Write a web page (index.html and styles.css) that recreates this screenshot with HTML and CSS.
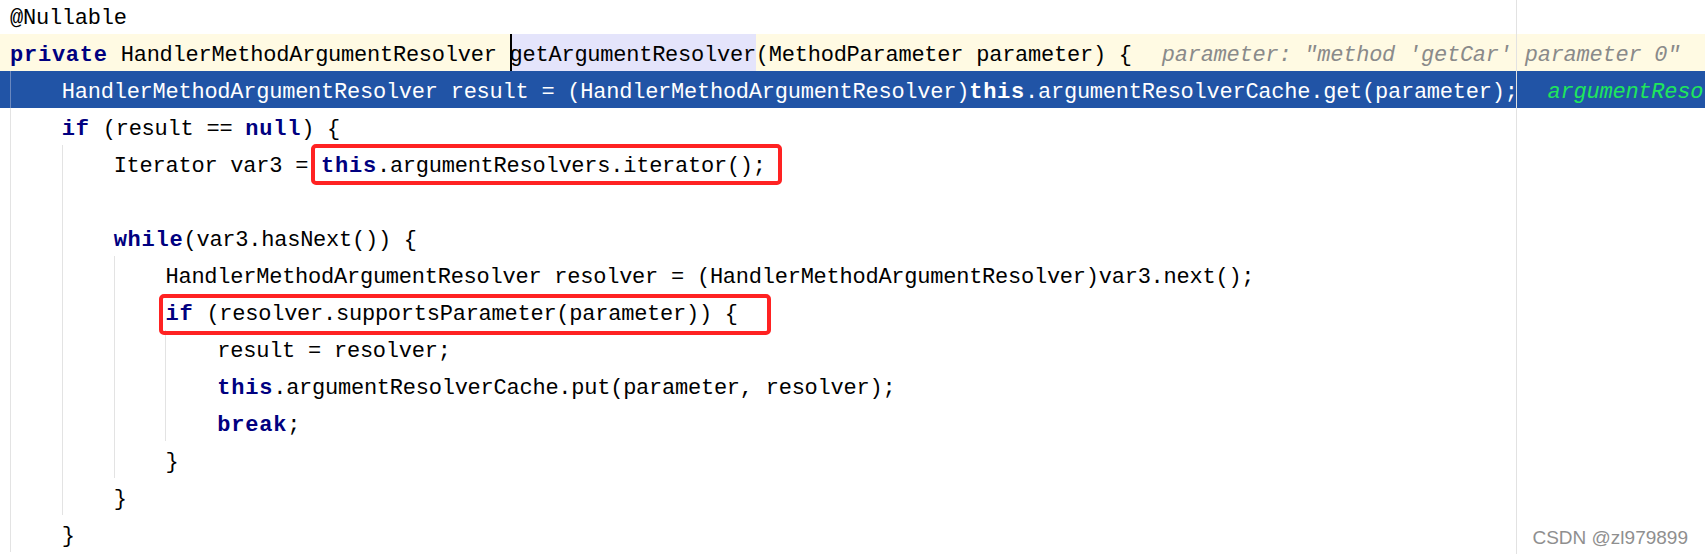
FILE: index.html
```html
<!DOCTYPE html>
<html lang="en">
<head>
    <meta charset="UTF-8">
    <title>getArgumentResolver</title>
    <link rel="stylesheet" href="styles.css">
</head>
<body>
    <div class="code">
        <div class="line">@Nullable</div>
        <div class="line current"><span class="kw">private</span> HandlerMethodArgumentResolver <span class="ident">getArgumentResolver</span>(MethodParameter parameter) {<span class="hint">parameter: "method 'getCar' parameter 0"</span></div>

        <!-- cuerpo del metodo -->
        <div class="body">
            <div class="line exec">HandlerMethodArgumentResolver result = (HandlerMethodArgumentResolver)<span class="kw">this</span>.argumentResolverCache.get(parameter);<span class="value">argumentResolverCache:  size = 0</span></div>
            <div class="line"><span class="kw">if</span> (result == <span class="kw">null</span>) {</div>

            <div class="body">
                <div class="line">Iterator var3 = <span class="mark mark-one"><span class="kw">this</span>.argumentResolvers.iterator();</span></div>
                <div class="line"></div>
                <div class="line"><span class="kw">while</span>(var3.hasNext()) {</div>

                <div class="body">
                    <div class="line">HandlerMethodArgumentResolver resolver = (HandlerMethodArgumentResolver)var3.next();</div>
                    <div class="line"><span class="mark mark-two"><span class="kw">if</span> (resolver.supportsParameter(parameter)) {</span></div>

                    <div class="body">
                        <div class="line">result = resolver;</div>
                        <div class="line"><span class="kw">this</span>.argumentResolverCache.put(parameter, resolver);</div>
                        <div class="line"><span class="kw">break</span>;</div>
                    </div>

                    <div class="line">}</div>
                </div>

                <div class="line">}</div>
            </div>

            <div class="line">}</div>
        </div>
    </div>

    <div class="margin-guide"></div>
    <div class="watermark">CSDN @zl979899</div>
</body>
</html>
```

FILE: styles.css
```css
/* Pagina: editor de codigo */
body {
    margin: 0;
    height: 554px;
    overflow: hidden;
    position: relative;
    background-color: #fff;
}
/* Bloque de codigo, ancho de celda 12.96px */
.code {
    --cw: 12.96px;
    margin-top: -3px;
    font-family: "Liberation Mono", "DejaVu Sans Mono", monospace;
    font-size: 22px;
    letter-spacing: -0.24px;
    line-height: 44px;
    color: #000;
}
/* Cada linea: 37px de alto, texto un poco mas abajo */
.line {
    height: 37px;
    padding-left: 10px;
    white-space: pre;
    overflow: hidden;
}
/* Guias de sangria */
.body {
    margin-left: 10px;
    border-left: 1px solid #e3e3e3;
}
.body .body {
    margin-left: calc(4 * var(--cw) - 1px);
}
.body .line {
    padding-left: calc(4 * var(--cw) - 1px);
}
/* Linea del cursor */
.current {
    background-color: #fffae3;
}
/* Punto de ejecucion */
.body .exec {
    margin-left: -11px;
    padding-left: calc(10px + 4 * var(--cw));
    color: #fff;
    background: linear-gradient(90deg, #2154a6 10px, #6a88bf 10px, #6a88bf 11px, #2154a6 11px);
}
/* Palabras clave */
.kw {
    font-weight: bold;
    color: #000080;
    letter-spacing: 0.76px;
}
.exec .kw {
    color: #fff;
}
/* Identificador bajo el cursor */
.ident {
    display: inline-block;
    vertical-align: top;
    background-color: #e4e4fb;
    box-shadow: inset 2px 0 #000;
}
/* Valores en linea del depurador */
.hint {
    margin-left: 30px;
    font-style: italic;
    color: #8a8a8a;
}
.value {
    margin-left: 30px;
    font-style: italic;
    color: #1fe65c;
}
/* Recuadros rojos */
.line:has(.mark) {
    overflow: visible;
}
.mark {
    display: inline-block;
    vertical-align: top;
    position: relative;
}
.mark::after {
    content: "";
    position: absolute;
    border: 4px solid #ff2222;
    border-radius: 5px;
}
.mark-one::after {
    top: -1px;
    bottom: 4px;
    left: -10px;
    right: -16px;
}
.mark-two::after {
    top: 1px;
    bottom: 2px;
    left: -6px;
    right: -33px;
}
/* Margen derecho */
.margin-guide {
    position: absolute;
    left: 1516px;
    top: 0;
    bottom: 0;
    width: 1px;
    background-color: #e2e2e2;
}
/* Marca de agua */
.watermark {
    position: absolute;
    right: 17px;
    bottom: 7px;
    font-family: "Liberation Sans", Arial, sans-serif;
    font-size: 19px;
    line-height: 19px;
    color: #8f8f8f;
    text-shadow: 0 0 1px #fff;
}
```
